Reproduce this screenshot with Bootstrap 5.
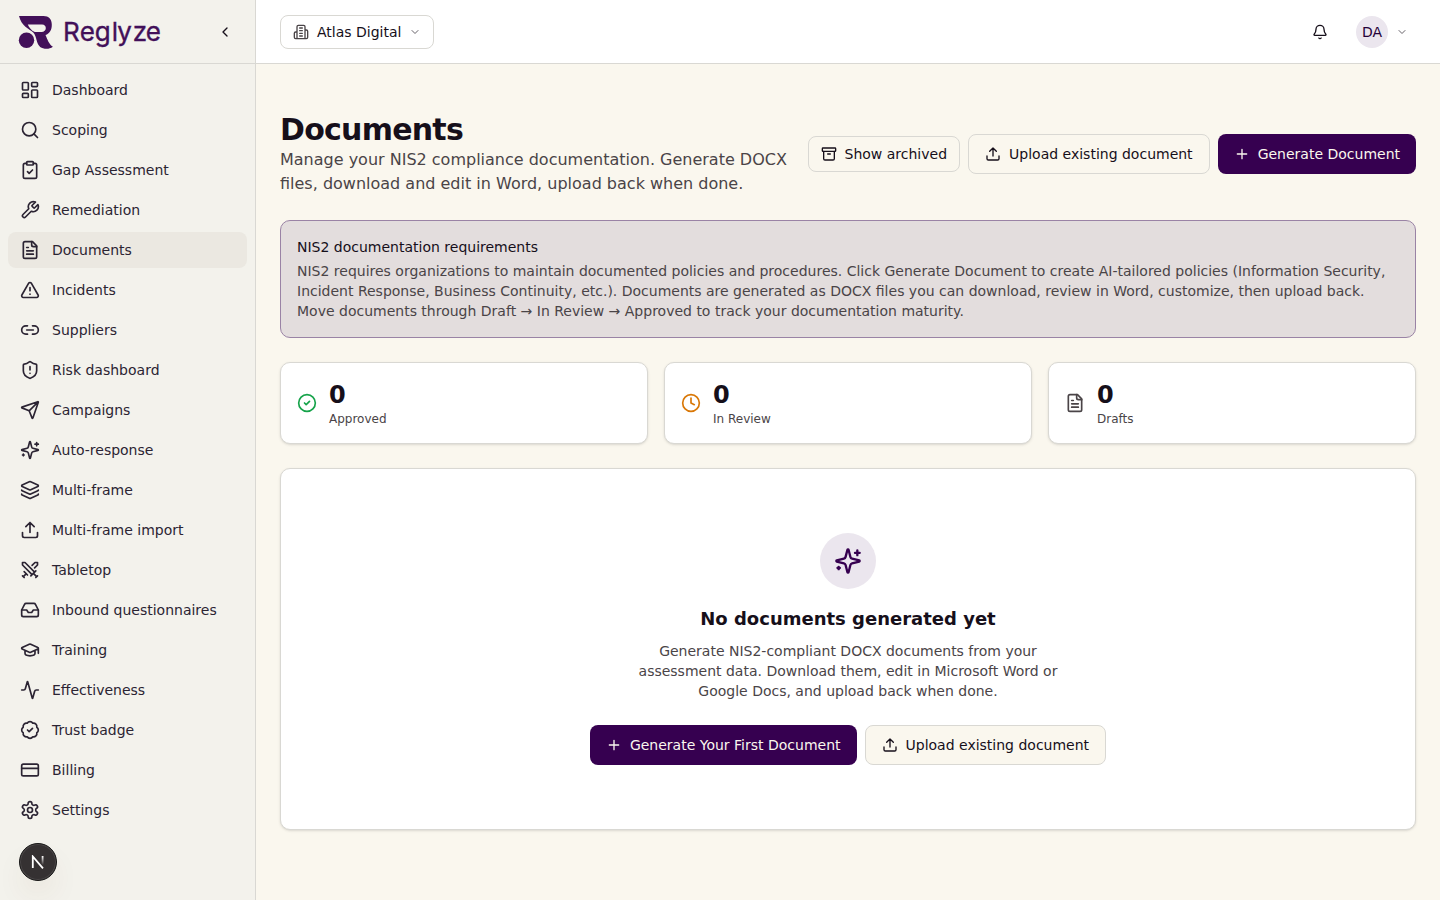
<!DOCTYPE html>
<html lang="en">
<head>
<meta charset="utf-8">
<meta name="viewport" content="width=device-width, initial-scale=1">
<title>Documents – Reglyze</title>
<link href="https://cdn.jsdelivr.net/npm/bootstrap@5.3.0/dist/css/bootstrap.min.css" rel="stylesheet">
<style>
  :root { --ink:#160f1a; --muted:#4a4447; --line:#d9d8d3; --brand:#360050; --cream:#faf7ee; }
  body { font-family:"DejaVu Sans",sans-serif; font-size:14px; line-height:20px; color:var(--ink); background:var(--cream); }
  svg.ic { width:16px; height:16px; flex:none; fill:none; stroke:currentColor; stroke-width:2; stroke-linecap:round; stroke-linejoin:round; }
  svg.ic-20 { width:20px; height:20px; }
  svg.ic-28 { width:28px; height:28px; }
  svg.ic-12 { width:12px; height:12px; opacity:.65; }
  .side { width:256px; background:#f3f2ec; border-right:1px solid var(--line); }
  .bar { height:64px; border-bottom:1px solid var(--line); }
  .collapse-ic { margin-right:22px; }
  .side .nav-link { height:36px; padding:0 12px; gap:12px; border-radius:8px; color:#2b2433; }
  .side .nav-link.active { background:#ebe8e1; }
  .btn { --bs-btn-font-size:14px; --bs-btn-line-height:20px; --bs-btn-border-radius:8px; height:40px; padding:0 16px; display:inline-flex; align-items:center; gap:8px; white-space:nowrap; }
  .btn-brand { --bs-btn-color:#faf7ee; --bs-btn-bg:var(--brand); --bs-btn-hover-bg:#4b1468; --bs-btn-hover-color:#fff; border:0; }
  .btn-line { --bs-btn-color:var(--ink); --bs-btn-bg:var(--cream); --bs-btn-border-color:var(--line); --bs-btn-hover-bg:#ebe8e1; }
  .btn-short { height:36px; padding:0 12px; }
  .org { width:154px; height:34px; --bs-btn-bg:#fff; }
  .round-tint { background:#ebe6ee; color:var(--brand); border-radius:50%; display:grid; place-items:center; }
  .avatar { width:32px; height:32px; margin-left:28px; color:#250038; }
  .hero-dot { width:56px; height:56px; }
  .page-title { font-size:30px; line-height:36px; font-weight:700; letter-spacing:-.75px; }
  .page-lead { font-size:16px; line-height:24px; color:var(--muted); width:520px; }
  .notice { background:#e3dddd; border:1px solid #9a83a5; border-radius:10px; padding:16px; }
  .soft { color:var(--muted); }
  .panel { --bs-card-border-color:var(--line); --bs-card-border-radius:10px; --bs-card-bg:#fff; color:var(--ink); box-shadow:0 1px 3px rgba(0,0,0,.1),0 1px 2px -1px rgba(0,0,0,.1); }
  .stat { gap:12px; }
  .figure-n { font-size:24px; line-height:32px; font-weight:700; }
  .figure-l { font-size:12px; line-height:16px; }
  .empty { padding:64px 0; }
  .empty h2 { font-size:18px; line-height:28px; font-weight:700; margin:16px 0 8px; }
  .empty p { width:448px; margin-bottom:24px; }
  .dev { left:19px; bottom:19px; width:38px; height:38px; border-radius:50%; place-items:center; background:#353132; border:1px solid #171717; box-shadow:inset 0 0 0 1px #4b4748,0 16px 32px -8px rgba(120,60,20,.16); }
</style>
</head>
<body>
<div class="d-flex vh-100 overflow-hidden">
  <aside class="side d-flex flex-column flex-shrink-0">
    <div class="bar d-flex align-items-center justify-content-between flex-shrink-0">
      <svg width="180" height="63" viewBox="0 0 180 63" role="img" aria-label="Reglyze">
        <g fill="#421059">
          <path fill-rule="evenodd" d="M19 16H43.5C48.8 16 51.8 19.3 51.8 24.8C51.8 30.2 49.6 33.6 45.5 35.1C47.6 39.7 48.8 44.3 52.9 46.8C49.8 49.1 46 49.2 43 48.3C39.2 47.1 37.6 44 36.7 40.4C35.9 37.3 35.3 34.6 33.3 32.4C28.8 28.6 21.6 26.5 19 16ZM27.8 24.6C29 27.7 31.4 30.6 34.8 32.1H41.5C47 32.1 47.3 24.6 42 24.6Z"/>
          <circle cx="26.5" cy="40.3" r="7.7"/>
          <text x="63 79.7 94.7 111.8 117.3 132.8 145.7" y="41" font-family="Inter,sans-serif" font-size="26" font-weight="400" stroke="#421059" stroke-width=".35">Reglyze</text>
        </g>
      </svg>
      <svg class="ic collapse-ic" viewBox="0 0 24 24"><path d="m15 18-6-6 6-6"/></svg>
    </div>
    <nav class="nav flex-column flex-nowrap gap-1 p-2">
      <a class="nav-link d-flex align-items-center" href="#"><svg class="ic ic-20" viewBox="0 0 24 24"><rect width="7" height="9" x="3" y="3" rx="1"/><rect width="7" height="5" x="14" y="3" rx="1"/><rect width="7" height="9" x="14" y="12" rx="1"/><rect width="7" height="5" x="3" y="16" rx="1"/></svg>Dashboard</a>
      <a class="nav-link d-flex align-items-center" href="#"><svg class="ic ic-20" viewBox="0 0 24 24"><circle cx="11" cy="11" r="8"/><path d="m21 21-4.34-4.34"/></svg>Scoping</a>
      <a class="nav-link d-flex align-items-center" href="#"><svg class="ic ic-20" viewBox="0 0 24 24"><rect width="8" height="4" x="8" y="2" rx="1"/><path d="M16 4h2a2 2 0 0 1 2 2v14a2 2 0 0 1-2 2H6a2 2 0 0 1-2-2V6a2 2 0 0 1 2-2h2m1 10 2 2 4-4"/></svg>Gap Assessment</a>
      <a class="nav-link d-flex align-items-center" href="#"><svg class="ic ic-20" viewBox="0 0 24 24"><path d="M14.7 6.3a1 1 0 0 0 0 1.4l1.6 1.6a1 1 0 0 0 1.4 0l3.77-3.77a6 6 0 0 1-7.94 7.94l-6.91 6.91a2.12 2.12 0 0 1-3-3l6.91-6.91a6 6 0 0 1 7.94-7.94l-3.76 3.76z"/></svg>Remediation</a>
      <a class="nav-link active d-flex align-items-center" href="#"><svg class="ic ic-20" viewBox="0 0 24 24"><path d="M15 2H6a2 2 0 0 0-2 2v16a2 2 0 0 0 2 2h12a2 2 0 0 0 2-2V7Z"/><path d="M14 2v4a2 2 0 0 0 2 2h4M10 9H8m8 4H8m8 4H8"/></svg>Documents</a>
      <a class="nav-link d-flex align-items-center" href="#"><svg class="ic ic-20" viewBox="0 0 24 24"><path d="m21.73 18-8-14a2 2 0 0 0-3.48 0l-8 14A2 2 0 0 0 4 21h16a2 2 0 0 0 1.73-3M12 9v4m0 4h.01"/></svg>Incidents</a>
      <a class="nav-link d-flex align-items-center" href="#"><svg class="ic ic-20" viewBox="0 0 24 24"><path d="M9 17H7A5 5 0 0 1 7 7h2m6 0h2a5 5 0 1 1 0 10h-2m-7-5h8"/></svg>Suppliers</a>
      <a class="nav-link d-flex align-items-center" href="#"><svg class="ic ic-20" viewBox="0 0 24 24"><path d="M20 13c0 5-3.5 7.5-7.66 8.95a1 1 0 0 1-.67-.01C7.5 20.5 4 18 4 13V6a1 1 0 0 1 1-1c2 0 4.5-1.2 6.24-2.72a1.17 1.17 0 0 1 1.52 0C14.51 3.81 17 5 19 5a1 1 0 0 1 1 1zM12 8v4m0 4h.01"/></svg>Risk dashboard</a>
      <a class="nav-link d-flex align-items-center" href="#"><svg class="ic ic-20" viewBox="0 0 24 24"><path d="M14.536 21.686a.5.5 0 0 0 .937-.024l6.5-19a.496.496 0 0 0-.635-.635l-19 6.5a.5.5 0 0 0-.024.937l7.93 3.18a2 2 0 0 1 1.112 1.11zM21.854 2.147l-10.94 10.939"/></svg>Campaigns</a>
      <a class="nav-link d-flex align-items-center" href="#"><svg class="ic ic-20" viewBox="0 0 24 24"><path id="spark" d="M9.937 15.5A2 2 0 0 0 8.5 14.063l-6.135-1.582a.5.5 0 0 1 0-.962L8.5 9.936A2 2 0 0 0 9.937 8.5l1.582-6.135a.5.5 0 0 1 .963 0L14.063 8.5A2 2 0 0 0 15.5 9.937l6.135 1.581a.5.5 0 0 1 0 .964L15.5 14.063a2 2 0 0 0-1.437 1.437l-1.582 6.135a.5.5 0 0 1-.963 0zM20 3v4m2-2h-4M4 17v2m1-1H3"/></svg>Auto-response</a>
      <a class="nav-link d-flex align-items-center" href="#"><svg class="ic ic-20" viewBox="0 0 24 24"><path d="M12.83 2.18a2 2 0 0 0-1.66 0L2.6 6.08a1 1 0 0 0 0 1.83l8.58 3.91a2 2 0 0 0 1.66 0l8.58-3.9a1 1 0 0 0 0-1.83zM2 12a1 1 0 0 0 .58.91l8.6 3.91a2 2 0 0 0 1.65 0l8.58-3.9A1 1 0 0 0 22 12M2 17a1 1 0 0 0 .58.91l8.6 3.91a2 2 0 0 0 1.65 0l8.58-3.9A1 1 0 0 0 22 17"/></svg>Multi-frame</a>
      <a class="nav-link d-flex align-items-center" href="#"><svg class="ic ic-20" viewBox="0 0 24 24"><path d="M12 3v12m5-7-5-5-5 5m14 7v4a2 2 0 0 1-2 2H5a2 2 0 0 1-2-2v-4"/></svg>Multi-frame import</a>
      <a class="nav-link d-flex align-items-center" href="#"><svg class="ic ic-20" viewBox="0 0 24 24"><path d="M14.5 17.5 3 6V3h3l11.5 11.5zM13 19l6-6m-3 3 4 4m-1 1 2-2M14.5 6.5 18 3h3v3l-3.5 3.5M5 14l4 4m-2-1-3 3m-1-1 2 2"/></svg>Tabletop</a>
      <a class="nav-link d-flex align-items-center" href="#"><svg class="ic ic-20" viewBox="0 0 24 24"><path d="M22 12h-6l-2 3h-4l-2-3H2"/><path d="M5.45 5.11 2 12v6a2 2 0 0 0 2 2h16a2 2 0 0 0 2-2v-6l-3.45-6.89A2 2 0 0 0 16.76 4H7.24a2 2 0 0 0-1.79 1.11z"/></svg>Inbound questionnaires</a>
      <a class="nav-link d-flex align-items-center" href="#"><svg class="ic ic-20" viewBox="0 0 24 24"><path d="M21.42 10.922a1 1 0 0 0-.019-1.838L12.83 5.18a2 2 0 0 0-1.66 0L2.6 9.08a1 1 0 0 0 0 1.832l8.57 3.908a2 2 0 0 0 1.66 0zM22 10v6M6 12.5V16a6 3 0 0 0 12 0v-3.5"/></svg>Training</a>
      <a class="nav-link d-flex align-items-center" href="#"><svg class="ic ic-20" viewBox="0 0 24 24"><path d="M22 12h-2.48a2 2 0 0 0-1.93 1.46l-2.35 8.36a.25.25 0 0 1-.48 0L9.24 2.18a.25.25 0 0 0-.48 0l-2.35 8.36A2 2 0 0 1 4.49 12H2"/></svg>Effectiveness</a>
      <a class="nav-link d-flex align-items-center" href="#"><svg class="ic ic-20" viewBox="0 0 24 24"><path d="M3.85 8.62a4 4 0 0 1 4.78-4.77 4 4 0 0 1 6.74 0 4 4 0 0 1 4.78 4.78 4 4 0 0 1 0 6.74 4 4 0 0 1-4.77 4.78 4 4 0 0 1-6.75 0 4 4 0 0 1-4.78-4.77 4 4 0 0 1 0-6.76ZM9 12l2 2 4-4"/></svg>Trust badge</a>
      <a class="nav-link d-flex align-items-center" href="#"><svg class="ic ic-20" viewBox="0 0 24 24"><rect width="20" height="14" x="2" y="5" rx="2"/><path d="M2 10h20"/></svg>Billing</a>
      <a class="nav-link d-flex align-items-center" href="#"><svg class="ic ic-20" viewBox="0 0 24 24"><path d="M12.22 2h-.44a2 2 0 0 0-2 2v.18a2 2 0 0 1-1 1.73l-.43.25a2 2 0 0 1-2 0l-.15-.08a2 2 0 0 0-2.73.73l-.22.38a2 2 0 0 0 .73 2.73l.15.1a2 2 0 0 1 1 1.72v.51a2 2 0 0 1-1 1.74l-.15.09a2 2 0 0 0-.73 2.73l.22.38a2 2 0 0 0 2.73.73l.15-.08a2 2 0 0 1 2 0l.43.25a2 2 0 0 1 1 1.73V20a2 2 0 0 0 2 2h.44a2 2 0 0 0 2-2v-.18a2 2 0 0 1 1-1.73l.43-.25a2 2 0 0 1 2 0l.15.08a2 2 0 0 0 2.73-.73l.22-.39a2 2 0 0 0-.73-2.73l-.15-.08a2 2 0 0 1-1-1.74v-.5a2 2 0 0 1 1-1.74l.15-.09a2 2 0 0 0 .73-2.73l-.22-.38a2 2 0 0 0-2.73-.73l-.15.08a2 2 0 0 1-2 0l-.43-.25a2 2 0 0 1-1-1.73V4a2 2 0 0 0-2-2z"/><circle cx="12" cy="12" r="3"/></svg>Settings</a>
    </nav>
  </aside>

  <div class="flex-grow-1 d-flex flex-column">
    <header class="bar bg-white d-flex align-items-center justify-content-between px-4 flex-shrink-0">
      <button class="btn btn-line btn-short org" type="button"><svg class="ic soft" viewBox="0 0 24 24"><path d="M6 22V4a2 2 0 0 1 2-2h8a2 2 0 0 1 2 2v18ZM6 12H4a2 2 0 0 0-2 2v6a2 2 0 0 0 2 2h2M18 9h2a2 2 0 0 1 2 2v9a2 2 0 0 1-2 2h-2M10 6h4m-4 4h4m-4 4h4m-4 4h4"/></svg>Atlas Digital<svg class="ic ic-12" viewBox="0 0 24 24"><path d="m6 9 6 6 6-6"/></svg></button>
      <div class="d-flex align-items-center pe-2">
        <svg class="ic" viewBox="0 0 24 24"><path d="M10.268 21a2 2 0 0 0 3.464 0M3.262 15.326A1 1 0 0 0 4 17h16a1 1 0 0 0 .74-1.673C19.41 13.956 18 12.499 18 8A6 6 0 0 0 6 8c0 4.499-1.411 5.956-2.738 7.326"/></svg>
        <span class="round-tint avatar me-2"><span>DA</span></span>
        <svg class="ic ic-12" viewBox="0 0 24 24"><path d="m6 9 6 6 6-6"/></svg>
      </div>
    </header>

    <main class="px-4 pt-5 d-flex flex-column gap-4">
      <div class="d-flex align-items-center justify-content-between">
        <div>
          <h1 class="page-title mb-0">Documents</h1>
          <p class="page-lead mb-0">Manage your NIS2 compliance documentation. Generate DOCX files, download and edit in Word, upload back when done.</p>
        </div>
        <div class="d-flex align-items-center gap-2">
          <button class="btn btn-line btn-short" type="button"><svg class="ic" viewBox="0 0 24 24"><rect width="20" height="5" x="2" y="3" rx="1"/><path d="M4 8v11a2 2 0 0 0 2 2h12a2 2 0 0 0 2-2V8M10 12h4"/></svg>Show archived</button>
          <button class="btn btn-line" type="button"><svg class="ic" viewBox="0 0 24 24"><path d="M12 3v12m5-7-5-5-5 5m14 7v4a2 2 0 0 1-2 2H5a2 2 0 0 1-2-2v-4"/></svg>Upload existing document</button>
          <button class="btn btn-brand" type="button"><svg class="ic" viewBox="0 0 24 24"><path d="M5 12h14M12 5v14"/></svg>Generate Document</button>
        </div>
      </div>

      <section class="notice">
        <div class="mb-1">NIS2 documentation requirements</div>
        <div class="soft">NIS2 requires organizations to maintain documented policies and procedures. Click Generate Document to create AI-tailored policies (Information Security, Incident Response, Business Continuity, etc.). Documents are generated as DOCX files you can download, review in Word, customize, then upload back. Move documents through Draft → In Review → Approved to track your documentation maturity.</div>
      </section>

      <div class="row gx-3">
        <div class="col-4"><div class="card panel p-3"><div class="stat d-flex align-items-center">
          <svg class="ic ic-20" style="color:#16a34a" viewBox="0 0 24 24"><circle cx="12" cy="12" r="10"/><path d="m9 12 2 2 4-4"/></svg>
          <div><div class="figure-n">0</div><div class="figure-l soft">Approved</div></div></div></div></div>
        <div class="col-4"><div class="card panel p-3"><div class="stat d-flex align-items-center">
          <svg class="ic ic-20" style="color:#d97706" viewBox="0 0 24 24"><circle cx="12" cy="12" r="10"/><path d="M12 6v6l4 2"/></svg>
          <div><div class="figure-n">0</div><div class="figure-l soft">In Review</div></div></div></div></div>
        <div class="col-4"><div class="card panel p-3"><div class="stat d-flex align-items-center">
          <svg class="ic ic-20 soft" viewBox="0 0 24 24"><path d="M15 2H6a2 2 0 0 0-2 2v16a2 2 0 0 0 2 2h12a2 2 0 0 0 2-2V7Z"/><path d="M14 2v4a2 2 0 0 0 2 2h4M10 9H8m8 4H8m8 4H8"/></svg>
          <div><div class="figure-n">0</div><div class="figure-l soft">Drafts</div></div></div></div></div>
      </div>

      <section class="card panel">
        <div class="empty d-flex flex-column align-items-center text-center">
          <span class="round-tint hero-dot"><svg class="ic ic-28" viewBox="0 0 24 24"><use href="#spark"/></svg></span>
          <h2>No documents generated yet</h2>
          <p class="soft">Generate NIS2-compliant DOCX documents from your assessment data. Download them, edit in Microsoft Word or Google Docs, and upload back when done.</p>
          <div class="d-flex gap-2">
            <button class="btn btn-brand" type="button"><svg class="ic" viewBox="0 0 24 24"><path d="M5 12h14M12 5v14"/></svg>Generate Your First Document</button>
            <button class="btn btn-line" type="button"><svg class="ic" viewBox="0 0 24 24"><path d="M12 3v12m5-7-5-5-5 5m14 7v4a2 2 0 0 1-2 2H5a2 2 0 0 1-2-2v-4"/></svg>Upload existing document</button>
          </div>
        </div>
      </section>
    </main>
  </div>
</div>
<div class="dev position-fixed d-grid">
  <svg width="14" height="14" viewBox="0 0 14 14" fill="none" stroke-width="1.8">
    <defs><linearGradient id="fade" x1="0" y1="1" x2="0" y2="13" gradientUnits="userSpaceOnUse"><stop stop-color="#fff"/><stop offset=".75" stop-color="#fff" stop-opacity="0"/></linearGradient></defs>
    <path d="M1.8 13V1.5L12 13.4" stroke="#fff"/><path d="M11.6 1v9" stroke="url(#fade)"/>
  </svg>
</div>
<script src="https://cdn.jsdelivr.net/npm/bootstrap@5.3.0/dist/js/bootstrap.bundle.min.js"></script>
</body>
</html>
